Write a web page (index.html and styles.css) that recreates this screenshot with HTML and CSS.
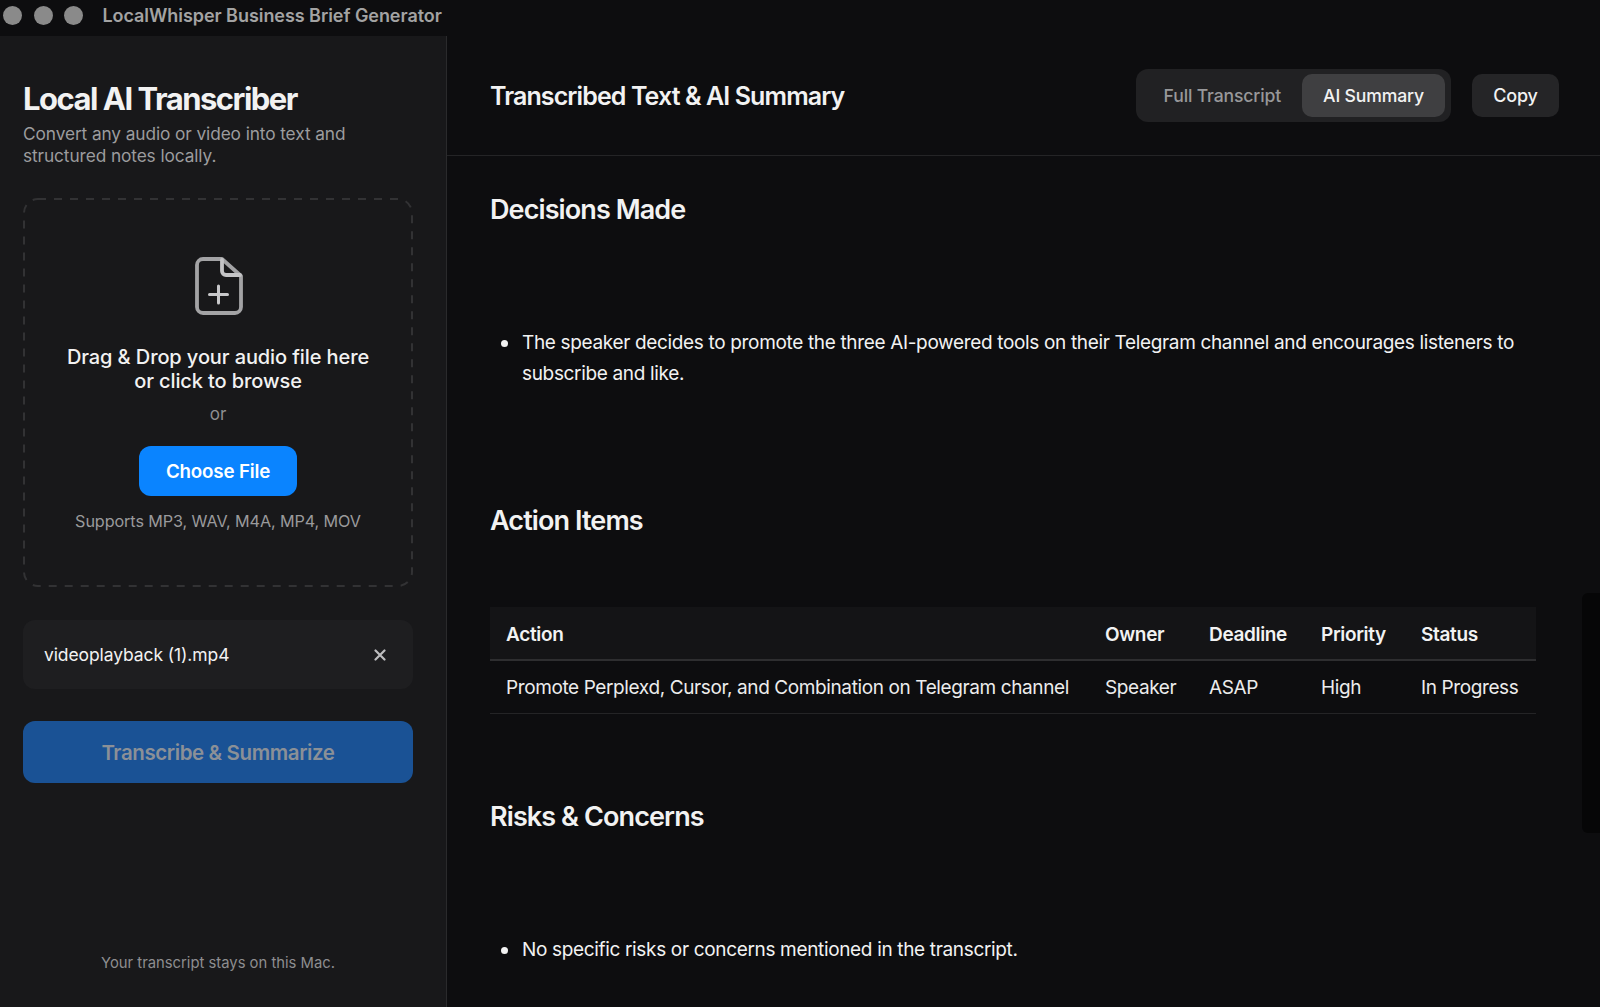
FILE: index.html
```html
<!DOCTYPE html>
<html lang="en">
<head>
  <meta charset="UTF-8" />
  <title>LocalWhisper Business Brief Generator</title>
  <link rel="stylesheet" href="styles.css">
</head>
<body>
  <div class="titlebar">
    <div class="dots">
      <span class="dot"></span>
      <span class="dot"></span>
      <span class="dot"></span>
    </div>
    <div class="window-title">LocalWhisper Business Brief Generator</div>
  </div>

  <div class="app">
    <!-- Left panel -->
    <aside class="sidebar">
      <h1>Local AI Transcriber</h1>
      <p class="subtitle">Convert any audio or video into text and structured notes locally.</p>

      <div class="dropzone">
        <svg class="dashes" viewBox="0 0 390 389" fill="none">
          <rect x="1" y="1" width="388" height="387" rx="14" stroke="#323234" stroke-width="2" stroke-dasharray="8 8"/>
        </svg>
        <svg class="file-icon" viewBox="0 0 48 58" fill="none" stroke="#a3a3a5" stroke-width="3.800" stroke-linejoin="round" stroke-linecap="round">
          <path d="M8 2h19l19 17v31a6 6 0 0 1-6 6H8a6 6 0 0 1-6-6V8a6 6 0 0 1 6-6z"/>
          <path d="M27 3v11a4 4 0 0 0 4 4h14" stroke="#c4c4c6"/>
          <path d="M23.500 29v17M14.500 37.500h18" stroke="#c8c8ca" stroke-width="3"/>
        </svg>
        <p class="drop-text">Drag &amp; Drop your audio file here<br>or click to browse</p>
        <p class="drop-or">or</p>
        <button class="choose-btn">Choose File</button>
        <p class="supports">Supports MP3, WAV, M4A, MP4, MOV</p>
      </div>

      <div class="file-row">
        <span>videoplayback (1).mp4</span>
        <svg class="close-icon" viewBox="0 0 12 12" stroke="#bdbdbf" stroke-width="2.200" stroke-linecap="round">
          <path d="M1.500 1.500l9 9M10.500 1.500l-9 9"/>
        </svg>
      </div>

      <button class="transcribe-btn">Transcribe &amp; Summarize</button>

      <p class="privacy">Your transcript stays on this Mac.</p>
    </aside>

    <!-- Right panel -->
    <main class="main">
      <header class="main-header">
        <h2 class="main-title">Transcribed Text &amp; AI Summary</h2>
        <div class="tabs">
          <button class="tab">Full Transcript</button>
          <button class="tab active">AI Summary</button>
        </div>
        <button class="copy-btn">Copy</button>
      </header>

      <div class="content">
        <h3>Decisions Made</h3>
        <ul>
          <li>The speaker decides to promote the three AI-powered tools on their Telegram channel and encourages listeners to subscribe and like.</li>
        </ul>

        <h3>Action Items</h3>
        <table>
          <thead>
            <tr>
              <th>Action</th>
              <th>Owner</th>
              <th>Deadline</th>
              <th>Priority</th>
              <th>Status</th>
            </tr>
          </thead>
          <tbody>
            <tr>
              <td>Promote Perplexd, Cursor, and Combination on Telegram channel</td>
              <td>Speaker</td>
              <td>ASAP</td>
              <td>High</td>
              <td>In Progress</td>
            </tr>
          </tbody>
        </table>

        <h3>Risks &amp; Concerns</h3>
        <ul>
          <li>No specific risks or concerns mentioned in the transcript.</li>
        </ul>
      </div>

      <div class="scrollbar"></div>
    </main>
  </div>
</body>
</html>
```

FILE: styles.css
```css
* {
  box-sizing: border-box;
}

html, body {
  margin: 0;
  height: 100%;
  overflow: hidden;
}

body {
  background-color: #0d0d0f;
  color: #f2f2f2;
  font-family: Inter, 'Liberation Sans', sans-serif;
  display: flex;
  flex-direction: column;
}

button {
  font-family: inherit;
  border: none;
  white-space: nowrap;
}

/* Title bar */
.titlebar {
  height: 36px;
  flex-shrink: 0;
  display: flex;
  align-items: center;
  padding-bottom: 6px;
  padding-left: 3px;
}

.dots {
  display: flex;
  gap: 11.700px;
}

.dot {
  width: 19px;
  height: 19px;
  border-radius: 50%;
  background-color: #8a8a8a;
}

.window-title {
  margin-left: 19px;
  color: #a3a3a3;
  font-size: 18px;
  font-weight: 600;
  letter-spacing: -0.05px;
}

.app {
  flex: 1;
  display: flex;
  min-height: 0;
}

/* Sidebar */
.sidebar {
  width: 447px;
  flex-shrink: 0;
  background-color: #18181a;
  border-right: 1px solid #2a2a2c;
  padding: 44px 33px 0 23px;
  display: flex;
  flex-direction: column;
}

h1 {
  margin: 0;
  font-size: 31px;
  line-height: 38px;
  font-weight: 700;
  letter-spacing: -1.5px;
}

.subtitle {
  margin: 5px 0 0;
  color: #9c9c9e;
  font-size: 17.300px;
  line-height: 21.500px;
  letter-spacing: -0.1px;
}

.dropzone {
  position: relative;
  margin-top: 32px;
  height: 389px;
  display: flex;
  flex-direction: column;
  align-items: center;
  padding-top: 59px;
}

.dashes {
  position: absolute;
  inset: 0;
  width: 100%;
  height: 100%;
}

.file-icon {
  width: 48px;
  height: 58px;
  margin-left: 1px;
}

.drop-text {
  margin: 30px 0 0;
  font-size: 20px;
  line-height: 24px;
  font-weight: 500;
  text-align: center;
  letter-spacing: -0.1px;
}

.drop-or {
  margin: 10px 0 0;
  color: #8e8e90;
  font-size: 17px;
  line-height: 22px;
}

.choose-btn {
  margin-top: 21px;
  width: 158px;
  height: 50px;
  background-color: #0a84ff;
  color: white;
  font-size: 18.800px;
  font-weight: 600;
  border-radius: 12px;
  letter-spacing: -0.2px;
}

.supports {
  margin: 14px 0 0;
  color: #9a9a9c;
  font-size: 16.200px;
  line-height: 22px;
  letter-spacing: -0.1px;
}

.file-row {
  margin-top: 33px;
  height: 69px;
  background-color: #1e1e20;
  border-radius: 12px;
  display: flex;
  align-items: center;
  justify-content: space-between;
  padding: 0 27px 0 21px;
  font-size: 17.500px;
  letter-spacing: -0.1px;
}

.close-icon {
  width: 12px;
  height: 12px;
}

.transcribe-btn {
  margin-top: 32px;
  height: 62px;
  background-color: #1a5295;
  color: #8b9097;
  font-size: 20.500px;
  font-weight: 600;
  border-radius: 12px;
  letter-spacing: -0.4px;
}

.privacy {
  margin: auto 0 34px;
  text-align: center;
  color: #8e8e90;
  font-size: 14.800px;
  line-height: 20px;
}

/* Main panel */
.main {
  flex: 1;
  min-width: 0;
  position: relative;
  overflow: hidden;
  display: flex;
  flex-direction: column;
}

.main-header {
  height: 120px;
  flex-shrink: 0;
  border-bottom: 1px solid #242426;
  display: flex;
  align-items: center;
  padding: 0 41px 1px 43px;
}

.main-title {
  margin: 2px auto 0 0;
  font-size: 25px;
  font-weight: 600;
  letter-spacing: -0.9px;
}

.tabs {
  display: flex;
  align-items: center;
  justify-content: flex-end;
  width: 315px;
  height: 53px;
  padding: 5px 6px;
  background-color: #212123;
  border-radius: 12px;
}

.tab {
  height: 43px;
  padding: 0 21px;
  background: none;
  color: #98989a;
  font-size: 17.600px;
  font-weight: 500;
  border-radius: 10px;
  letter-spacing: -0.15px;
}

.tab.active {
  width: 143px;
  flex-shrink: 0;
  padding: 0;
  background-color: #3f3f41;
  color: #f2f2f2;
}

.copy-btn {
  margin-left: 21px;
  width: 87px;
  height: 43px;
  background-color: #252527;
  color: #f2f2f2;
  font-size: 18px;
  font-weight: 500;
  border-radius: 10px;
  letter-spacing: -0.15px;
}

.content {
  padding: 35px 64px 0 43px;
}

h3 {
  margin: 0;
  font-size: 27px;
  line-height: 38px;
  font-weight: 600;
  letter-spacing: -0.9px;
}

ul {
  margin: 0;
  padding-left: 32px;
  list-style: none;
}

li {
  position: relative;
  font-size: 19px;
  line-height: 30.500px;
  letter-spacing: -0.34px;
}

li::before {
  content: "";
  position: absolute;
  left: -21.500px;
  top: 12px;
  width: 7px;
  height: 7px;
  border-radius: 50%;
  background-color: #f2f2f2;
}

h3 + ul {
  margin-top: 99px;
}

ul + h3 {
  margin-top: 113px;
}

table {
  width: 100%;
  margin-top: 67px;
  table-layout: fixed;
  border-collapse: collapse;
  font-size: 19px;
  letter-spacing: -0.34px;
}

th {
  height: 53px;
  padding: 2px 16px 0;
  text-align: left;
  font-weight: 600;
  background-color: #141416;
  border-bottom: 2px solid #2e2e30;
}

th:nth-child(1) { width: 599px; }
th:nth-child(2) { width: 104px; }
th:nth-child(3) { width: 112px; }
th:nth-child(4) { width: 100px; }

td {
  height: 53px;
  padding: 2px 16px 0;
  color: #ececec;
  white-space: nowrap;
  letter-spacing: -0.39px;
  border-bottom: 1px solid #242426;
}

table + h3 {
  margin-top: 84px;
}

.scrollbar {
  position: absolute;
  right: 0;
  top: 557px;
  width: 18px;
  height: 240px;
  background-color: #060607;
  border-radius: 6px 0 0 6px;
}
```
